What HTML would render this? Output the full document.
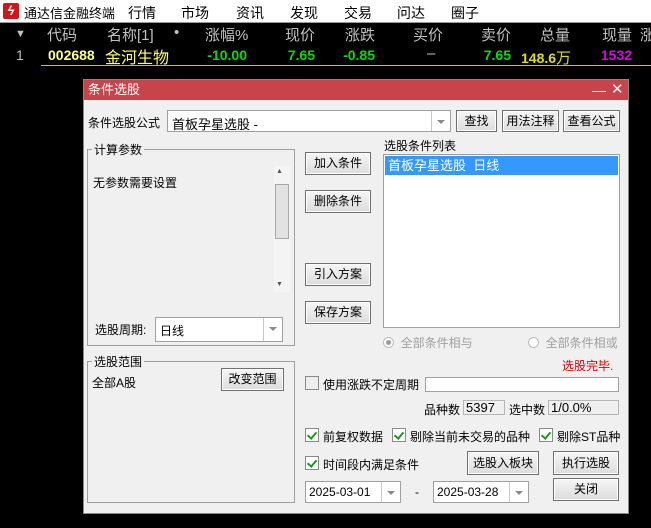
<!DOCTYPE html><html><head><meta charset="utf-8"><style>
*{margin:0;padding:0;box-sizing:border-box}
body{width:651px;height:528px;background:#000;position:relative;overflow:hidden;font-family:"Liberation Sans","Noto Sans CJK SC",sans-serif;font-size:12px;color:#000}
.a{position:absolute;white-space:nowrap}
.m{font-size:14px;color:#000;top:3px}
.h{font-size:15px;color:#c0c0c0;top:24px}
.r{font-size:15px;top:45px}
.n{font-size:14px;top:47px;font-weight:bold}
.btn{position:absolute;border:1px solid #707070;background:linear-gradient(#f6f6f6,#dcdcdc);text-align:center;font-size:12px;line-height:20px;box-shadow:inset 0 0 0 1px #fff}
.box{position:absolute;background:#fff;border:1px solid #a0a0a0}
.grp{position:absolute;border:1px solid #a0a0a0}
.leg{position:absolute;background:#f0f0f0;padding:0 2px;top:-9px;left:4px}
.cb{position:absolute;width:14px;height:14px;border:1px solid #8a8a8a;background:#fff}
.cb.k::after{content:"";position:absolute;left:3px;top:1px;width:4px;height:7px;border:solid #1a9a1a;border-width:0 2px 2px 0;transform:rotate(40deg)}
.dd{position:absolute;right:0;top:0;bottom:0;width:19px;border-left:1px solid #c8c8c8}
.dd::after{content:"";position:absolute;left:5px;top:9px;border:4px solid transparent;border-top:4px solid #888}
.ro{position:absolute;background:#f0f0f0;border:1px solid #b5b5b5;padding-left:2px;line-height:14px;font-size:13px}
</style></head><body>
<div class="a" style="left:0;top:0;width:651px;height:23px;background:#fff;border-bottom:1px solid #999"></div>
<div class="a" style="left:3px;top:3px;width:16px;height:16px;background:#d3141a;border-radius:2px;color:#fff;font-size:13px;line-height:16px;text-align:center;font-weight:bold;font-style:italic">ϟ</div>
<div class="a m" style="left:24px;font-size:13px">通达信金融终端</div>
<div class="a m" style="left:128px">行情</div><div class="a m" style="left:181px">市场</div><div class="a m" style="left:236px">资讯</div><div class="a m" style="left:290px">发现</div><div class="a m" style="left:344px">交易</div><div class="a m" style="left:397px">问达</div><div class="a m" style="left:451px">圈子</div>
<div class="a h" style="left:15px;font-size:11px;top:28px">▼</div>
<div class="a h" style="left:47px">代码</div><div class="a h" style="left:107px">名称[1]</div><div class="a h" style="left:174px">•</div><div class="a h" style="left:205px">涨幅%</div>
<div class="a h" style="right:336px">现价</div><div class="a h" style="right:276px">涨跌</div><div class="a h" style="right:208px">买价</div><div class="a h" style="right:140px">卖价</div><div class="a h" style="right:81px">总量</div><div class="a h" style="right:19px">现量</div><div class="a h" style="left:640px">涨</div>
<div class="a n" style="left:16px;color:#c0c0c0;font-weight:normal">1</div>
<div class="a n" style="left:48px;color:#ffff80">002688</div>
<div class="a r" style="left:105px;color:#ffff60;font-size:16px;top:44px">金河生物</div>
<div class="a n" style="right:404px;color:#00e000">-10.00</div>
<div class="a n" style="right:336px;color:#00e000">7.65</div>
<div class="a n" style="right:276px;color:#00e000">-0.85</div>
<div class="a r" style="left:427px;color:#c0c0c0">–</div>
<div class="a n" style="right:140px;color:#00e000">7.65</div>
<div class="a n" style="left:521px;color:#e0e000">148.6<span style="font-weight:normal;font-size:15px">万</span></div>
<div class="a n" style="right:19px;color:#e000e0">1532</div>
<div class="a" style="left:41px;top:65px;width:610px;height:1px;background:#c8c800"></div>

<div class="a" style="left:83px;top:79px;width:546px;height:435px;background:#f0f0f0;border:1px solid #888">
<div class="a" style="left:0;top:0;width:544px;height:20px;background:#c9434a;color:#fff;font-size:13px;line-height:20px;padding-left:4px">条件选股<span style="position:absolute;left:508px;font-size:14px">—</span><span style="position:absolute;left:527px;font-size:15px">✕</span></div>
</div>
<div class="a" style="left:88px;top:114px">条件选股公式</div>
<div class="box" style="left:167px;top:110px;width:284px;height:22px;padding:3px 4px;font-size:13px">首板孕星选股 -<div class="dd"></div></div>
<div class="btn" style="left:456px;top:110px;width:41px;height:22px">查找</div>
<div class="btn" style="left:502px;top:110px;width:57px;height:22px">用法注释</div>
<div class="btn" style="left:563px;top:110px;width:57px;height:22px">查看公式</div>

<div class="grp" style="left:87px;top:149px;width:208px;height:197px"><div class="leg">计算参数</div></div>
<div class="a" style="left:93px;top:174px">无参数需要设置</div>
<div class="a" style="left:274px;top:166px;width:16px;height:126px;background:#f4f4f4"></div>
<div class="a" style="left:276px;top:168px;font-size:7px;color:#555">▲</div>
<div class="a" style="left:276px;top:281px;font-size:7px;color:#555">▼</div>
<div class="a" style="left:275px;top:184px;width:14px;height:55px;background:#e2e2e2;border:1px solid #a8a8a8"></div>
<div class="a" style="left:95px;top:321px">选股周期:</div>
<div class="box" style="left:155px;top:317px;width:128px;height:25px;padding:4px 4px">日线<div class="dd" style="top:0"></div></div>

<div class="btn" style="left:305px;top:152px;width:66px;height:23px">加入条件</div>
<div class="btn" style="left:305px;top:190px;width:66px;height:23px">删除条件</div>
<div class="btn" style="left:305px;top:263px;width:66px;height:23px">引入方案</div>
<div class="btn" style="left:305px;top:301px;width:66px;height:23px">保存方案</div>

<div class="a" style="left:384px;top:137px">选股条件列表</div>
<div class="box" style="left:383px;top:154px;width:237px;height:174px"><div style="margin:1px;height:19px;background:#3399ff;color:#fff;padding-left:3px;font-size:13px;line-height:19px">首板孕星选股&nbsp; 日线</div></div>
<div class="a" style="left:383px;top:334px;color:#a0a0a0"><span style="display:inline-block;width:11px;height:11px;border:1px solid #bbb;border-radius:50%;background:radial-gradient(#999 2px,#fff 3px);vertical-align:-1px"></span>&nbsp; 全部条件相与</div>
<div class="a" style="left:528px;top:334px;color:#a0a0a0"><span style="display:inline-block;width:11px;height:11px;border:1px solid #bbb;border-radius:50%;background:#fff;vertical-align:-1px"></span>&nbsp; 全部条件相或</div>
<div class="a" style="left:562px;top:357px;color:#e00000">选股完毕.</div>

<div class="grp" style="left:87px;top:361px;width:208px;height:142px"><div class="leg">选股范围</div></div>
<div class="a" style="left:92px;top:374px">全部A股</div>
<div class="btn" style="left:221px;top:368px;width:63px;height:23px">改变范围</div>

<div class="cb" style="left:305px;top:376px;background:#eee"></div>
<div class="a" style="left:323px;top:376px">使用涨跌不定周期</div>
<div class="box" style="left:425px;top:377px;width:194px;height:15px"></div>
<div class="a" style="left:424px;top:401px">品种数</div>
<div class="ro" style="left:463px;top:400px;width:42px;height:15px">5397</div>
<div class="a" style="left:509px;top:401px">选中数</div>
<div class="ro" style="left:548px;top:400px;width:71px;height:15px">1/0.0%</div>

<div class="cb k" style="left:305px;top:428px"></div><div class="a" style="left:323px;top:428px">前复权数据</div>
<div class="cb k" style="left:392px;top:428px"></div><div class="a" style="left:410px;top:428px">剔除当前未交易的品种</div>
<div class="cb k" style="left:539px;top:428px"></div><div class="a" style="left:557px;top:428px">剔除ST品种</div>
<div class="cb k" style="left:305px;top:456px"></div><div class="a" style="left:323px;top:456px">时间段内满足条件</div>
<div class="btn" style="left:467px;top:451px;width:72px;height:24px;line-height:22px">选股入板块</div>
<div class="btn" style="left:553px;top:451px;width:66px;height:24px;line-height:22px">执行选股</div>
<div class="box" style="left:305px;top:481px;width:96px;height:22px;padding:3px 3px">2025-03-01<div class="dd"></div></div>
<div class="a" style="left:415px;top:485px">-</div>
<div class="box" style="left:433px;top:481px;width:96px;height:22px;padding:3px 3px">2025-03-28<div class="dd"></div></div>
<div class="btn" style="left:553px;top:478px;width:66px;height:23px">关闭</div>
</body></html>
